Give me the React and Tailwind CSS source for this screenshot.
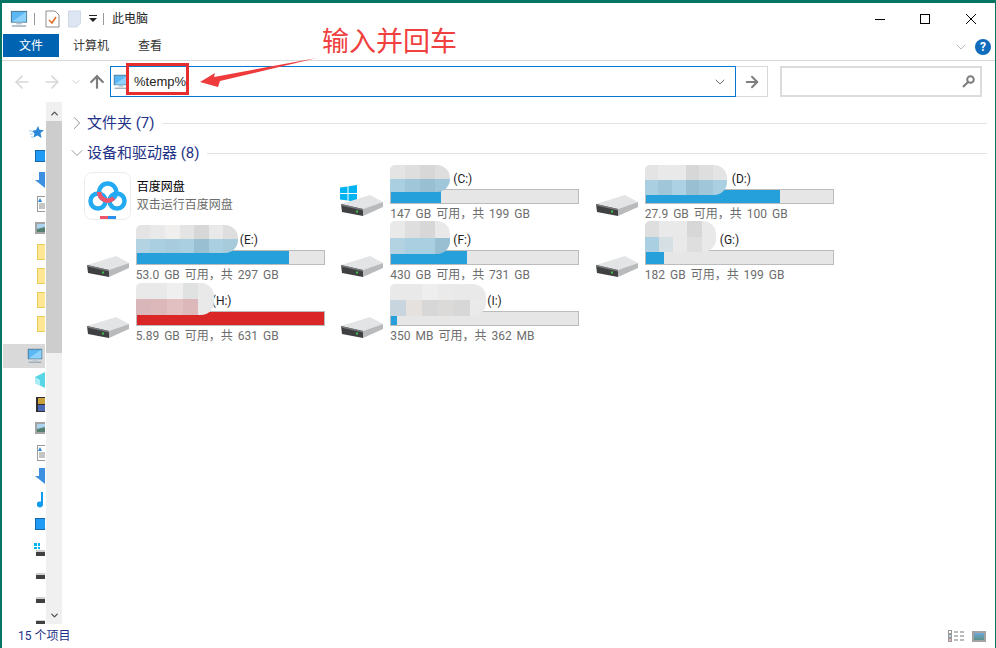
import React from "react";
import { ArrowLeft, ArrowRight, ArrowUp, ChevronDown, ChevronRight, ChevronUp } from "lucide-react";

const FONT = "font-['Roboto','Noto_Sans_CJK_SC',sans-serif]";

const g1 = "#e4e4e4", g2 = "#dfdede", g3 = "#d8d7d7", g4 = "#e9e9e9";
const b1 = "#a9cfe0", b2 = "#a0c6da", b3 = "#98bfd2", b4 = "#acd0e4";
const p1 = "#d8b6ba", p2 = "#dcb8bb", p3 = "#e2bfc0";

const drives = [
    { name: "(C:)", free: "147 GB 可用，共 199 GB", pct: 26.5, system: true, labelX: 63, blur: { w: 60, top: -5, h: 27, up: [g1, g2, g3, g2], low: [b1, b2, b3, b2] } },
    { name: "(D:)", free: "27.9 GB 可用，共 100 GB", pct: 72, labelX: 87, blur: { w: 82, top: -5, h: 30, up: [g1, g4, g4, g3, g2, g1], low: [b1, b2, b4, b3, b2, b1] } },
    { name: "(E:)", free: "53.0 GB 可用，共 297 GB", pct: 81.5, labelX: 104, blur: { w: 102, top: -6, h: 28, up: [g1, g4, "#f0efee", g1, g3, g4, g2], low: ["#b3d3e2", b1, "#a9cbde", b1, b3, b1, "#a8cbdc"] } },
    { name: "(F:)", free: "430 GB 可用，共 731 GB", pct: 40.5, labelX: 63, blur: { w: 60, top: -10, h: 33, up: [g4, g2, g3, g4], low: ["#b4d3e2", b1, b1, b3] } },
    { name: "(G:)", free: "182 GB 可用，共 199 GB", pct: 9.5, labelX: 75, blur: { w: 71, top: -10, h: 31, up: [g2, g4, g4, g3, g4], low: [b1, "#d6dfe3", g4, g2, g4] } },
    { name: "(H:)", free: "5.89 GB 可用，共 631 GB", pct: 100, red: true, labelX: 76, blur: { w: 78, top: -9, h: 32, up: [g4, g4, "#efefef", "#e0e2e2", g4], low: [p1, p2, p3, p2, g4] } },
    { name: "(I:)", free: "350 MB 可用，共 362 MB", pct: 3, labelX: 97, blur: { w: 96, top: -8, h: 32, up: [g4, g4, "#efeeee", "#ebeaea", g4, g4], low: ["#c8d5de", "#e4e1df", g3, "#dcdad9", g3, "#eaeaea"] } },
];

// y is the icon's top on the page, h its height
const navIcons = [
    { y: 126, h: 12, type: "star" },
    { y: 150, h: 12, type: "desk" },
    { y: 172, h: 16, type: "down" },
    { y: 196, h: 16, type: "doc" },
    { y: 222, h: 12, type: "pic" },
    { y: 244, h: 16, type: "folder" },
    { y: 268, h: 16, type: "folder" },
    { y: 292, h: 16, type: "folder" },
    { y: 316, h: 16, type: "folder" },
    { y: 344, h: 24, type: "pc" },
    { y: 372, h: 16, type: "cube" },
    { y: 397, h: 15, type: "film" },
    { y: 422, h: 12, type: "pic" },
    { y: 445, h: 16, type: "doc" },
    { y: 468, h: 16, type: "down" },
    { y: 492, h: 16, type: "music" },
    { y: 518, h: 12, type: "desk" },
    { y: 543, h: 13, type: "sysdrive" },
    { y: 573, h: 6, type: "drive" },
    { y: 597, h: 6, type: "drive" },
    { y: 620, h: 4, type: "drive" },
];

const Monitor = ({ size = 20 }) => (
    <svg width={size} height={size} viewBox="0 0 20 20">
        <rect x="1.5" y="1.5" width="17" height="12" fill="#5bb8f5" stroke="#3f6f8a" />
        <path d="M2 13 L18 2 V13 Z" fill="#8ed2fb" />
        <rect x="7" y="14" width="6" height="2" fill="#b5c4cf" />
        <rect x="2" y="17" width="16" height="1.6" fill="#9aaab6" />
    </svg>
);

const DriveIcon = ({ system }) => (
    <div className="relative w-[46px] h-[46px] shrink-0">
        {system && (
            <svg className="absolute left-[1px] top-[14px]" width="17" height="17" viewBox="0 0 17 17">
                <path d="M0 2.5 L7.5 1.4 V8 H0 Z M8.5 1.2 L17 0 V8 H8.5 Z M0 9 H7.5 V15.6 L0 14.5 Z M8.5 9 H17 V17 L8.5 15.8 Z" fill="#00b4f1" />
            </svg>
        )}
        <svg className="absolute left-[2px] top-[24px]" width="43" height="22" viewBox="0 0 43 22">
            <path d="M0 9 L29 0 L42 7 L22 14 Z" fill="#e3e4e5" />
            <path d="M0 9 L22 14 V21 L1 17 Z" fill="#3e4042" />
            <path d="M0 9 L22 14 L22 15.5 L0 10.5 Z" fill="#77797b" />
            <path d="M22 14 L42 7 V12 L22 21 Z" fill="#b9babc" />
            <rect x="15" y="15.5" width="2" height="2" fill="#3fc24a" />
        </svg>
    </div>
);

const Mosaic = ({ w, top, h, up, low }) => (
    <div
        className="absolute left-0 flex flex-col overflow-hidden rounded-r-[13px] rounded-tl-[5px]"
        style={{ width: w, top, height: h }}
    >
        <div className="flex flex-1">
            {up.map((c, i) => (
                <div key={i} className="flex-1" style={{ background: c }} />
            ))}
        </div>
        <div className="flex flex-1">
            {low.map((c, i) => (
                <div key={i} className="flex-1" style={{ background: c }} />
            ))}
        </div>
    </div>
);

const DriveTile = ({ drive }) => (
    <div className="flex w-[254.5px] h-[61px] items-start pl-[1px]">
        <div className="mt-[1px]">
            <DriveIcon system={drive.system} />
        </div>
        <div className="relative ml-[5px] w-[189px]">
            <div className="h-[19px] pt-[1px] text-[12px] leading-[16px] text-[#222]" style={{ paddingLeft: drive.labelX }}>
                {drive.name}
            </div>
            <div className="h-[15px] border border-[#bcbcbc] bg-[#e6e6e6]">
                <div className={`h-full ${drive.red ? "bg-[#da2626]" : "bg-[#26a0da]"}`} style={{ width: `${drive.pct}%` }} />
            </div>
            <div className="mt-[2px] text-[12px] leading-[16px] text-[#6d6d6d] whitespace-nowrap [word-spacing:2px]">{drive.free}</div>
            <Mosaic {...drive.blur} />
        </div>
    </div>
);

const NavIcon = ({ type }) => {
    if (type === "folder") return <div className="h-full w-[8px] border border-r-0 border-[#eccb58] bg-[#ffe793]" />;
    if (type === "desk") return <div className="h-full w-[10px] border border-r-0 border-[#1769aa] bg-[#1f9bf5]" />;
    if (type === "down") return <div className="h-full w-[10px] bg-[#3d8fe0] [clip-path:polygon(40%_0,100%_0,100%_100%,0_50%,40%_50%)]" />;
    if (type === "doc")
        return (
            <svg width="8" height="16" viewBox="0 0 8 16">
                <rect x="0.5" y="0.5" width="8" height="15" fill="#fff" stroke="#9a9a9a" />
                <path d="M3 2 L5 6 H1 Z" fill="#2b88d8" />
                <path d="M2 8 H8 M2 10 H8 M2 12 H8" stroke="#8a8a8a" />
            </svg>
        );
    if (type === "pic")
        return (
            <svg width="10" height="12" viewBox="0 0 10 12">
                <rect x="1" y="1" width="10" height="10" fill="#a9d3ee" stroke="#a3a3a3" strokeWidth="2" />
                <path d="M2 7 L10 5 V10 H2 Z" fill="#55806f" />
            </svg>
        );
    if (type === "cube")
        return (
            <svg width="10" height="16" viewBox="0 0 10 16">
                <path d="M0 5 L10 0 V16 L0 11 Z" fill="#59d6e6" />
                <path d="M0 5 L5 8 V13.5 L0 11 Z" fill="#a8eef4" />
            </svg>
        );
    if (type === "film")
        return (
            <svg width="9" height="15" viewBox="0 0 9 15">
                <rect width="9" height="15" fill="#2f2f2f" />
                <rect x="2" y="1" width="7" height="6" fill="#c9a03a" />
                <rect x="2" y="8" width="7" height="6" fill="#4a69b5" />
            </svg>
        );
    if (type === "music")
        return (
            <svg width="8" height="16" viewBox="0 0 8 16">
                <path d="M4 0 H6 V12 A3.2 3 0 1 1 4 9.6 Z" fill="#0f9bf0" />
            </svg>
        );
    if (type === "sysdrive")
        return (
            <div className="flex h-full w-[11px] flex-col">
                <div className="grid h-[6px] w-[6px] grid-cols-2 gap-px">
                    <div className="bg-[#00b4f1]" />
                    <div className="bg-[#00b4f1]" />
                    <div className="bg-[#00b4f1]" />
                    <div className="bg-[#00b4f1]" />
                </div>
                <div className="ml-[2px] mt-[1px] h-[6px] w-[9px] bg-[linear-gradient(#cfcfcf_30%,#3e4042_30%)]" />
            </div>
        );
    if (type === "drive") return <div className="h-full w-[9px] bg-[linear-gradient(#cfcfcf_30%,#3e4042_30%)]" />;
    return (
        <svg width="16" height="12" viewBox="0 0 16 12">
            <path d="M9 0 L10.5 3.8 L15 4.2 L11.5 7 L12.5 12 L8.5 9.5 L4.5 11.5 L5.5 7.5 L3 5 L7 4 Z" fill="#2b88d8" />
            <path d="M0 5 H3 M1 8 H4 M2 11 H5" stroke="#9ccbee" />
        </svg>
    );
};

const NavColumn = () => {
    let bottom = 102;
    return (
        <div className="flex w-[44px] shrink-0 flex-col overflow-hidden">
            {navIcons.map((n, i) => {
                const gap = n.y - bottom;
                bottom = n.y + n.h;
                if (n.type === "pc") {
                    return (
                        <div key={i} className="ml-[1px] mr-[1px] flex h-[24px] shrink-0 items-center justify-end bg-[#d9d9d9] pr-[2px]" style={{ marginTop: gap }}>
                            <Monitor size={16} />
                        </div>
                    );
                }
                return (
                    <div key={i} className="flex shrink-0 justify-end pr-[1px]" style={{ marginTop: gap, height: n.h }}>
                        <NavIcon type={n.type} />
                    </div>
                );
            })}
        </div>
    );
};

const App = () => {
    return (
        <div className={`relative w-[996px] h-[648px] overflow-hidden flex flex-col bg-white border-t-[3px] border-l-[2px] border-r-[1px] border-[#047562] ${FONT}`}>
            {/* title bar */}
            <div className="flex h-[31px] shrink-0 items-center pl-[8px]">
                <Monitor size={18} />
                <div className="ml-[6px] h-[12px] w-px bg-[#9a9a9a]" />
                <svg className="ml-[10px]" width="15" height="18" viewBox="0 0 15 18">
                    <path d="M1 1 H10 L14 5 V17 H1 Z" fill="#fff" stroke="#8f8f8f" />
                    <path d="M4 10 L7 13 L11 7" fill="none" stroke="#e0702a" strokeWidth="1.6" />
                </svg>
                <svg className="ml-[8px]" width="13" height="18" viewBox="0 0 13 18">
                    <path d="M0.5 1 H12.5 V13 L9 17 H0.5 Z" fill="#dde6f2" stroke="#cfd9e8" />
                </svg>
                <svg className="ml-[8px]" width="8" height="8" viewBox="0 0 8 8">
                    <rect y="0" width="8" height="1" fill="#222" />
                    <path d="M0 3 H8 L4 7 Z" fill="#222" />
                </svg>
                <div className="ml-[6px] h-[12px] w-px bg-[#9a9a9a]" />
                <span className="ml-[8px] text-[12px] leading-none text-[#222]">此电脑</span>
                <div className="ml-auto mr-[19px] flex items-center">
                    <svg width="10" height="10" viewBox="0 0 10 10"><path d="M0 5.5 H10" stroke="#000" /></svg>
                    <svg className="ml-[35px]" width="10" height="10" viewBox="0 0 10 10"><rect x="0.5" y="0.5" width="9" height="9" fill="none" stroke="#000" /></svg>
                    <svg className="ml-[36px]" width="10" height="10" viewBox="0 0 10 10"><path d="M0 0 L10 10 M10 0 L0 10" stroke="#000" /></svg>
                </div>
            </div>

            {/* ribbon tabs */}
            <div className="flex h-[27px] shrink-0 items-start border-b border-[#d9d9d9]">
                <div className="ml-[1px] flex h-[23px] w-[56px] items-center justify-center bg-[#0063b1] text-[12px] text-white">文件</div>
                <div className="ml-[14px] flex h-[23px] items-center text-[12px] text-[#333]">计算机</div>
                <div className="ml-[29px] flex h-[23px] items-center text-[12px] text-[#333]">查看</div>
                <div className="ml-auto mr-[4px] mt-[5px] flex items-center gap-[6px]">
                    <ChevronDown size={16} strokeWidth={1.2} className="text-[#a8a8a8]" />
                    <div className="flex h-[16px] w-[16px] items-center justify-center rounded-full bg-[#0f6cbd] text-[12px] font-bold leading-none text-white">?</div>
                </div>
            </div>

            {/* address bar */}
            <div className="flex h-[41px] shrink-0 items-start pt-[5px] pl-[10px]">
                <div className="flex h-[31px] items-center">
                    <ArrowLeft size={20} strokeWidth={2} className="text-[#d8d8d8]" />
                    <ArrowRight size={20} strokeWidth={2} className="ml-[10px] text-[#d8d8d8]" />
                    <ChevronDown size={12} strokeWidth={2} className="ml-[8px] text-[#d0d0d0]" />
                    <ArrowUp size={20} strokeWidth={2.6} className="ml-[5px] text-[#7d7d7d]" />
                </div>
                <div className="ml-[3px] flex h-[31px] w-[626px] items-center border border-[#0078d7] pl-[2px] pr-[7px]">
                    <Monitor size={16} />
                    <span className="ml-[5px] text-[13px] text-[#222] [font-family:'Liberation_Sans',sans-serif]">%temp%</span>
                    <ChevronDown size={16} strokeWidth={1.2} className="ml-auto text-[#444]" />
                </div>
                <div className="flex h-[31px] w-[32px] items-center justify-center border border-l-0 border-[#d9d9d9]">
                    <ArrowRight size={18} strokeWidth={2.6} className="text-[#7d7d7d]" />
                </div>
                <div className="ml-[12px] flex h-[31px] w-[202px] items-center justify-end border-2 border-[#dcdcdc] pr-[5px]">
                    <svg width="13" height="13" viewBox="0 0 13 13">
                        <circle cx="8.5" cy="4.5" r="3.3" fill="none" stroke="#7d7d7d" strokeWidth="2" />
                        <path d="M6 7 L1 12" stroke="#7d7d7d" strokeWidth="2.2" />
                    </svg>
                </div>
            </div>

            {/* body */}
            <div className="flex min-h-0 flex-1">
                <NavColumn />
                <div className="flex w-[16px] shrink-0 flex-col bg-[#f0f0f0]">
                    <div className="flex h-[19px] items-center justify-center pt-[3px]"><ChevronUp size={11} strokeWidth={3} className="text-[#555]" /></div>
                    <div className="h-[232px] bg-[#cdcdcd]" />
                    <div className="flex-1" />
                    <div className="flex h-[18px] items-start justify-center pt-[4px]"><ChevronDown size={11} strokeWidth={3} className="text-[#555]" /></div>
                </div>
                <div className="min-w-0 flex-1 pt-[13px] pl-[7px]">
                    <div className="flex h-[16px] items-center">
                        <div className="flex w-[16px] justify-center"><ChevronRight size={22} strokeWidth={1} className="shrink-0 text-[#888]" /></div>
                        <span className="ml-[2px] text-[15px] leading-none text-[#1e3287]">文件夹 (7)</span>
                        <div className="ml-[7px] mr-[8px] h-px flex-1 bg-[#e2e2e2]" />
                    </div>
                    <div className="mt-[14px] flex h-[16px] items-center">
                        <div className="flex w-[16px] justify-center"><ChevronDown size={20} strokeWidth={1} className="shrink-0 text-[#888]" /></div>
                        <span className="ml-[2px] text-[15px] leading-none text-[#1e3287]">设备和驱动器 (8)</span>
                        <div className="ml-[7px] mr-[8px] h-px flex-1 bg-[#e2e2e2]" />
                    </div>
                    <div className="mt-[9px] ml-[14.8px] flex flex-wrap">
                        <div className="flex w-[254.5px] h-[61px] items-start">
                            <div className="relative mt-[2px] h-[48px] w-[47px] rounded-[8px] border border-[#ececec] bg-white">
                                <svg className="absolute left-[-1px] top-[-1px]" width="47" height="48" viewBox="0 0 47 48">
                                    <circle cx="14" cy="29" r="7.5" fill="none" stroke="#23aaf2" strokeWidth="4.5" />
                                    <circle cx="33" cy="29" r="7.5" fill="none" stroke="#23aaf2" strokeWidth="4.5" />
                                    <circle cx="23.7" cy="20" r="8.5" fill="none" stroke="#23aaf2" strokeWidth="4.5" />
                                    <path d="M15.2 20 A8.5 8.5 0 0 0 29.7 26" fill="none" stroke="#f0566b" strokeWidth="4.5" />
                                </svg>
                                <div className="absolute bottom-0 left-[15px] flex h-[3px] w-[16px]">
                                    <div className="flex-1 bg-[#f0566b]" />
                                    <div className="flex-1 bg-[#2a8fee]" />
                                </div>
                            </div>
                            <div className="ml-[6px] mt-[8px]">
                                <div className="text-[12px] leading-[18px] text-black">百度网盘</div>
                                <div className="text-[12px] leading-[18px] text-[#6d6d6d]">双击运行百度网盘</div>
                            </div>
                        </div>
                        {drives.map((d) => (
                            <DriveTile key={d.name} drive={d} />
                        ))}
                    </div>
                </div>
            </div>

            {/* status bar */}
            <div className="flex h-[24px] shrink-0 items-center pl-[16px] pr-[9px]">
                <span className="text-[12px] text-[#1e3287]">15 个项目</span>
                <div className="ml-auto flex items-center gap-[7px]">
                    <svg width="17" height="13" viewBox="0 0 17 13">
                        <rect x="0.5" y="0.5" width="3" height="3" fill="#fff" stroke="#999" />
                        <rect x="0.5" y="4.5" width="3" height="3" fill="#bcd6ea" stroke="#999" />
                        <rect x="0.5" y="8.5" width="3" height="3" fill="#e7b7b0" stroke="#999" />
                        <path d="M6 2 H10 M12 2 H16 M6 6 H10 M12 6 H16 M6 10 H10 M12 10 H16" stroke="#777" />
                    </svg>
                    <div className="h-[11px] w-[14px] border-2 border-[#a3a3a3] bg-[linear-gradient(#6fa8dc,#5d8f86)]" />
                </div>
            </div>

            {/* annotation */}
            <div className="absolute left-[124px] top-[60px] h-[32px] w-[63px] border-[3px] border-[#e62e2e]" />
            <svg className="absolute left-[196px] top-[52px]" width="125" height="40" viewBox="0 0 125 40">
                <path d="M2 27 L17 18 L16 22 L119 3 L22 26 L20 32 Z" fill="#ef3b3b" />
            </svg>
            <div className="absolute left-[320px] top-[26px] text-[27px] leading-none text-[#f04040]">输入并回车</div>
        </div>
    );
};

export default App;
